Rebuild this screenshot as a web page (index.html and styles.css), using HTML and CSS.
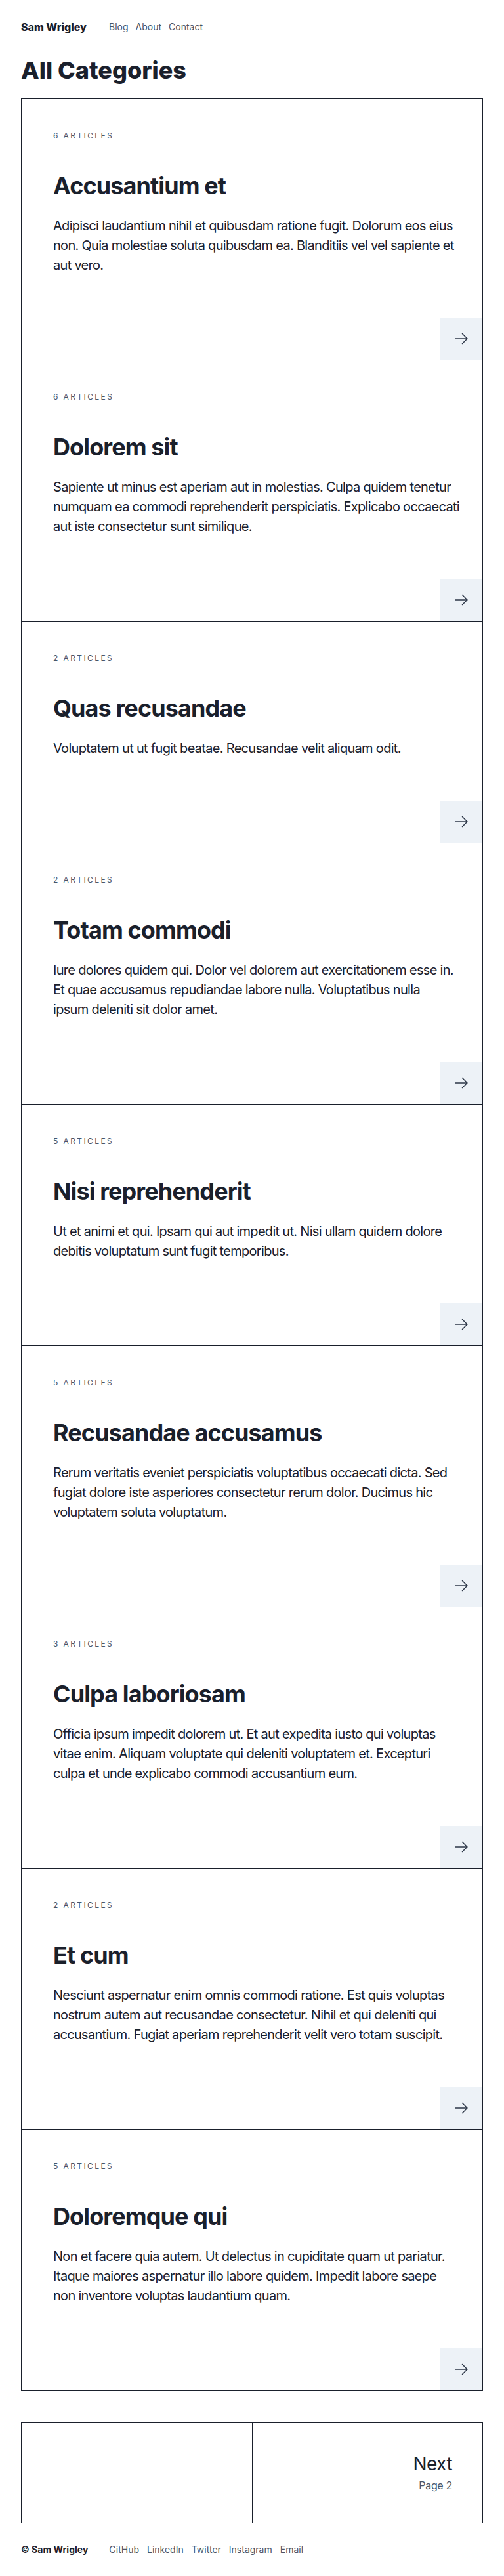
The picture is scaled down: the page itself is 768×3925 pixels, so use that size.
FILE: index.html
```html
<!DOCTYPE html>
<html lang="en">
<head>
<meta charset="utf-8">
<title>All Categories</title>
<link rel="stylesheet" href="styles.css">
</head>
<body>
<header class="site-header">
  <a class="brand" href="#">Sam Wrigley</a>
  <nav class="nav">
    <a href="#">Blog</a>
    <a href="#">About</a>
    <a href="#">Contact</a>
  </nav>
</header>

<main class="main">
  <h1 class="page-title">All Categories</h1>

  <div class="cards">
    <article class="card">
      <div class="card-body">
        <div class="card-count">6 Articles</div>
        <h2 class="card-title">Accusantium et</h2>
        <p class="card-text">Adipisci laudantium nihil et quibusdam ratione fugit. Dolorum eos eius<br>non. Quia molestiae soluta quibusdam ea. Blanditiis vel vel sapiente et<br>aut vero.</p>
      </div>
      <div class="card-foot"><a class="card-link" href="#" aria-label="Open"><svg viewBox="0 0 24 24" width="24" height="24" fill="none" stroke="currentColor" stroke-width="1.5" stroke-linecap="round" stroke-linejoin="round"><path d="M13.5 4.5 21 12m0 0-7.5 7.5M21 12H3"/></svg></a></div>
    </article>

    <article class="card">
      <div class="card-body">
        <div class="card-count">6 Articles</div>
        <h2 class="card-title">Dolorem sit</h2>
        <p class="card-text">Sapiente ut minus est aperiam aut in molestias. Culpa quidem tenetur<br>numquam ea commodi reprehenderit perspiciatis. Explicabo occaecati<br>aut iste consectetur sunt similique.</p>
      </div>
      <div class="card-foot"><a class="card-link" href="#" aria-label="Open"><svg viewBox="0 0 24 24" width="24" height="24" fill="none" stroke="currentColor" stroke-width="1.5" stroke-linecap="round" stroke-linejoin="round"><path d="M13.5 4.5 21 12m0 0-7.5 7.5M21 12H3"/></svg></a></div>
    </article>

    <article class="card">
      <div class="card-body">
        <div class="card-count">2 Articles</div>
        <h2 class="card-title">Quas recusandae</h2>
        <p class="card-text">Voluptatem ut ut fugit beatae. Recusandae velit aliquam odit.</p>
      </div>
      <div class="card-foot"><a class="card-link" href="#" aria-label="Open"><svg viewBox="0 0 24 24" width="24" height="24" fill="none" stroke="currentColor" stroke-width="1.5" stroke-linecap="round" stroke-linejoin="round"><path d="M13.5 4.5 21 12m0 0-7.5 7.5M21 12H3"/></svg></a></div>
    </article>

    <article class="card">
      <div class="card-body">
        <div class="card-count">2 Articles</div>
        <h2 class="card-title">Totam commodi</h2>
        <p class="card-text">Iure dolores quidem qui. Dolor vel dolorem aut exercitationem esse in.<br>Et quae accusamus repudiandae labore nulla. Voluptatibus nulla<br>ipsum deleniti sit dolor amet.</p>
      </div>
      <div class="card-foot"><a class="card-link" href="#" aria-label="Open"><svg viewBox="0 0 24 24" width="24" height="24" fill="none" stroke="currentColor" stroke-width="1.5" stroke-linecap="round" stroke-linejoin="round"><path d="M13.5 4.5 21 12m0 0-7.5 7.5M21 12H3"/></svg></a></div>
    </article>

    <article class="card">
      <div class="card-body">
        <div class="card-count">5 Articles</div>
        <h2 class="card-title">Nisi reprehenderit</h2>
        <p class="card-text">Ut et animi et qui. Ipsam qui aut impedit ut. Nisi ullam quidem dolore<br>debitis voluptatum sunt fugit temporibus.</p>
      </div>
      <div class="card-foot"><a class="card-link" href="#" aria-label="Open"><svg viewBox="0 0 24 24" width="24" height="24" fill="none" stroke="currentColor" stroke-width="1.5" stroke-linecap="round" stroke-linejoin="round"><path d="M13.5 4.5 21 12m0 0-7.5 7.5M21 12H3"/></svg></a></div>
    </article>

    <article class="card">
      <div class="card-body">
        <div class="card-count">5 Articles</div>
        <h2 class="card-title">Recusandae accusamus</h2>
        <p class="card-text">Rerum veritatis eveniet perspiciatis voluptatibus occaecati dicta. Sed<br>fugiat dolore iste asperiores consectetur rerum dolor. Ducimus hic<br>voluptatem soluta voluptatum.</p>
      </div>
      <div class="card-foot"><a class="card-link" href="#" aria-label="Open"><svg viewBox="0 0 24 24" width="24" height="24" fill="none" stroke="currentColor" stroke-width="1.5" stroke-linecap="round" stroke-linejoin="round"><path d="M13.5 4.5 21 12m0 0-7.5 7.5M21 12H3"/></svg></a></div>
    </article>

    <article class="card">
      <div class="card-body">
        <div class="card-count">3 Articles</div>
        <h2 class="card-title">Culpa laboriosam</h2>
        <p class="card-text">Officia ipsum impedit dolorem ut. Et aut expedita iusto qui voluptas<br>vitae enim. Aliquam voluptate qui deleniti voluptatem et. Excepturi<br>culpa et unde explicabo commodi accusantium eum.</p>
      </div>
      <div class="card-foot"><a class="card-link" href="#" aria-label="Open"><svg viewBox="0 0 24 24" width="24" height="24" fill="none" stroke="currentColor" stroke-width="1.5" stroke-linecap="round" stroke-linejoin="round"><path d="M13.5 4.5 21 12m0 0-7.5 7.5M21 12H3"/></svg></a></div>
    </article>

    <article class="card">
      <div class="card-body">
        <div class="card-count">2 Articles</div>
        <h2 class="card-title">Et cum</h2>
        <p class="card-text">Nesciunt aspernatur enim omnis commodi ratione. Est quis voluptas<br>nostrum autem aut recusandae consectetur. Nihil et qui deleniti qui<br>accusantium. Fugiat aperiam reprehenderit velit vero totam suscipit.</p>
      </div>
      <div class="card-foot"><a class="card-link" href="#" aria-label="Open"><svg viewBox="0 0 24 24" width="24" height="24" fill="none" stroke="currentColor" stroke-width="1.5" stroke-linecap="round" stroke-linejoin="round"><path d="M13.5 4.5 21 12m0 0-7.5 7.5M21 12H3"/></svg></a></div>
    </article>

    <article class="card">
      <div class="card-body">
        <div class="card-count">5 Articles</div>
        <h2 class="card-title">Doloremque qui</h2>
        <p class="card-text">Non et facere quia autem. Ut delectus in cupiditate quam ut pariatur.<br>Itaque maiores aspernatur illo labore quidem. Impedit labore saepe<br>non inventore voluptas laudantium quam.</p>
      </div>
      <div class="card-foot"><a class="card-link" href="#" aria-label="Open"><svg viewBox="0 0 24 24" width="24" height="24" fill="none" stroke="currentColor" stroke-width="1.5" stroke-linecap="round" stroke-linejoin="round"><path d="M13.5 4.5 21 12m0 0-7.5 7.5M21 12H3"/></svg></a></div>
    </article>
  </div>

  <nav class="pager">
    <div class="pager-cell"></div>
    <a class="pager-cell pager-next" href="#">
      <span class="pager-label">Next</span>
      <span class="pager-sub">Page 2</span>
    </a>
  </nav>
</main>

<footer class="site-footer">
  <span class="copy">© Sam Wrigley</span>
  <nav class="footer-links">
    <a href="#">GitHub</a>
    <a href="#">LinkedIn</a>
    <a href="#">Twitter</a>
    <a href="#">Instagram</a>
    <a href="#">Email</a>
  </nav>
</footer>
</body>
</html>
```

FILE: styles.css
```css
* { box-sizing: border-box; }

html, body {
  margin: 0;
  padding: 0;
  background: #ffffff;
}

body {
  font-family: Inter, "Noto Sans", "Liberation Sans", sans-serif;
  color: #1a202c;
}

a { color: inherit; text-decoration: none; }

.site-header {
  display: flex;
  align-items: center;
  gap: 34px;
  padding: 29px 32px 0;
  height: 53px;
}

.brand {
  font-size: 16px;
  line-height: 24px;
  font-weight: 800;
  color: #1a202c;
}

.nav {
  display: flex;
  gap: 11px;
  font-size: 14px;
  line-height: 20px;
}

.nav a { color: #4a5568; }

.main {
  padding: 0 32px;
}

.page-title {
  margin: 34px 0 23px;
  font-size: 36px;
  line-height: 40px;
  font-weight: 800;
  color: #1a202c;
}

.cards {
  border-left: 1px solid #1a202c;
  border-right: 1px solid #1a202c;
  border-bottom: 1px solid #1a202c;
}

.card {
  border-top: 1px solid #1a202c;
  display: flex;
  flex-direction: column;
}

.card-body {
  padding: 48px 32px 65px 48px;
}

.card-count {
  font-size: 12px;
  line-height: 16px;
  letter-spacing: 0.2em;
  text-transform: uppercase;
  color: #4a5568;
  margin-bottom: 48px;
}

.card-title {
  margin: 0;
  font-size: 36px;
  line-height: 40px;
  font-weight: 700;
  letter-spacing: -0.025em;
  color: #1a202c;
}

.card-text {
  margin: 26px 0 0;
  font-size: 20px;
  line-height: 30px;
  letter-spacing: -0.035em;
  white-space: nowrap;
  color: #1a202c;
}

.card-foot {
  display: flex;
  justify-content: flex-end;
}

.card-link {
  width: 64px;
  height: 64px;
  display: flex;
  align-items: center;
  justify-content: center;
  background: #edf2f7;
  color: #2d3748;
}

.pager {
  margin-top: 48px;
  display: grid;
  grid-template-columns: 1fr 1fr;
  border: 1px solid #1a202c;
}

.pager-cell {
  min-height: 152px;
}

.pager-cell + .pager-cell {
  border-left: 1px solid #1a202c;
}

.pager-next {
  display: flex;
  flex-direction: column;
  align-items: flex-end;
  justify-content: center;
  padding: 0 46px;
  text-align: right;
}

.pager-label {
  font-size: 28px;
  line-height: 32px;
  letter-spacing: -0.02em;
  color: #1a202c;
}

.pager-sub {
  margin-top: 5px;
  font-size: 16px;
  line-height: 24px;
  letter-spacing: -0.02em;
  color: #4a5568;
}

.site-footer {
  display: flex;
  align-items: center;
  gap: 32px;
  padding: 30px 32px 28px;
  font-size: 14px;
  line-height: 20px;
}

.copy {
  font-weight: 700;
  color: #1a202c;
}

.footer-links {
  display: flex;
  gap: 12px;
}

.footer-links a { color: #4a5568; }
```
